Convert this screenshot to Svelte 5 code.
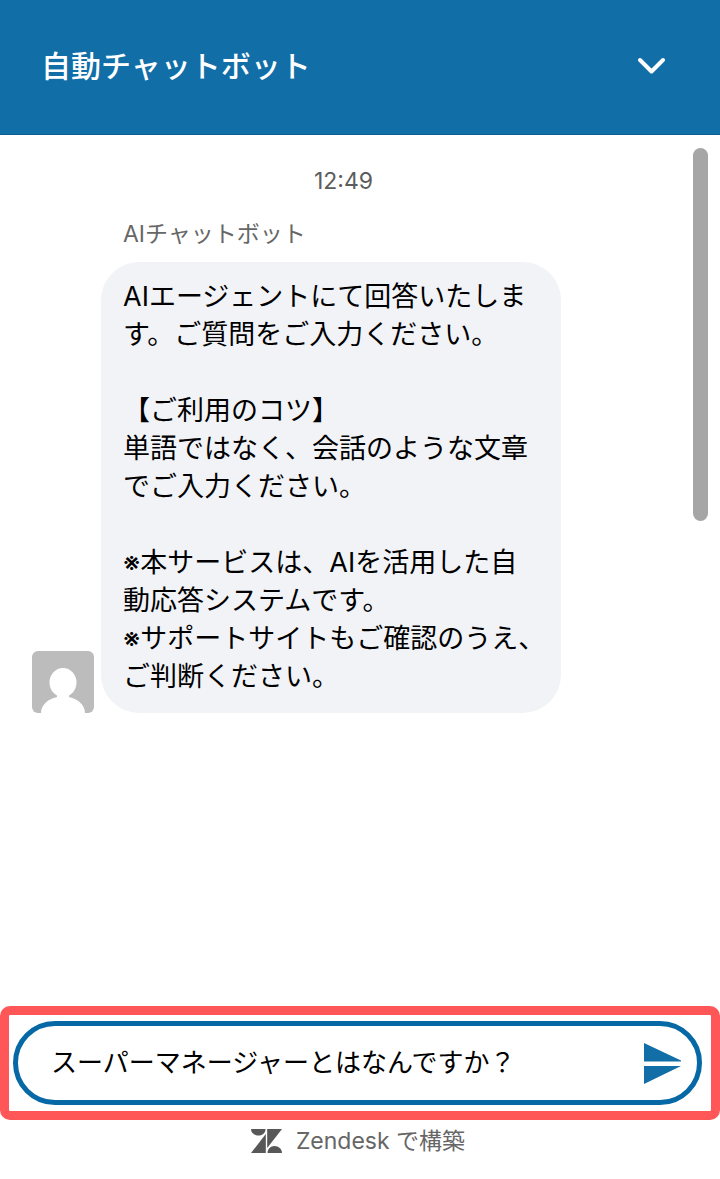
<script lang="ts">
  let title = "自動チャットボット";
  let time = "12:49";
  let sender = "AIチャットボット";
  let draft = $state("スーパーマネージャーとはなんですか？");

  const lines = [
    "AIエージェントにて回答いたしま",
    "す。ご質問をご入力ください。",
    "",
    "【ご利用のコツ】",
    "単語ではなく、会話のような文章",
    "でご入力ください。",
    "",
    "※本サービスは、AIを活用した自",
    "動応答システムです。",
    "※サポートサイトもご確認のうえ、",
    "ご判断ください。",
  ];

  function handleSubmit(event: SubmitEvent) {
    event.preventDefault();
    draft = "";
  }
</script>

<div class="widget">
  <header class="header">
    <h1 class="title">{title}</h1>
    <button class="minimize" type="button" aria-label="最小化">
      <svg width="32" height="20" viewBox="0 0 32 20" fill="none">
        <path d="M4 4L15.5 15.5L27 4" stroke="#fff" stroke-width="4" stroke-linecap="round" stroke-linejoin="round" />
      </svg>
    </button>
  </header>

  <main class="conversation">
    <div class="messages">
      <time class="time">{time}</time>
      <div class="message">
        <svg class="avatar" width="62" height="62" viewBox="0 0 62 62" aria-hidden="true">
          <rect width="62" height="62" rx="6" fill="#bcbcbc" />
          <ellipse cx="31" cy="31.5" rx="13.5" ry="14.5" fill="#fff" />
          <path d="M25 43V46C16 48 9 54 9 62H53C53 54 46 48 37 46V43Z" fill="#fff" />
        </svg>
        <div class="message-body">
          <div class="sender">{sender}</div>
          <div class="bubble">
            {#each lines as line}
              <div class="line">{line}</div>
            {/each}
          </div>
        </div>
      </div>
    </div>
    <div class="scroll-track">
      <div class="scroll-thumb"></div>
    </div>
  </main>

  <div class="highlight">
    <form class="composer" onsubmit={handleSubmit}>
      <input class="input" type="text" aria-label="メッセージを入力" bind:value={draft} />
      <button class="send" type="submit" aria-label="送信">
        <svg width="40" height="44" viewBox="0 0 40 44" fill="#116ea7">
          <path d="M1 2L38 19.5V20.5H1Z" />
          <path d="M1 25H38L1 43Z" />
        </svg>
      </button>
    </form>
  </div>

  <footer class="footer">
    <a class="brand" href="#zendesk">
      <svg width="31" height="24" viewBox="0 0 31 24" fill="#585858" aria-hidden="true">
        <path d="M0 0H14.5C14.5 4 11.5 6.5 7.5 6.5S0 4 0 0Z" />
        <path d="M14.8 5V24H0Z" />
        <path d="M16.2 0H31L16.2 19Z" />
        <path d="M16.5 24C16.5 20 19.5 17 23.5 17S31 20 31 24Z" />
      </svg>
      <span>Zendesk で構築</span>
    </a>
  </footer>
</div>

<style>
  :global(body) {
    margin: 0;
    background: #fff;
  }

  .widget {
    display: flex;
    flex-direction: column;
    min-height: 100vh;
    font-family: Inter, "Noto Sans CJK JP", sans-serif;
    color: #000;
  }

  .header {
    display: flex;
    align-items: center;
    justify-content: space-between;
    box-sizing: border-box;
    height: 135px;
    padding: 0 52px 2px 41px;
    background: #116ea7;
    border-bottom: 1px solid #0a5f96;
  }

  .title {
    margin: 0;
    font-size: 30px;
    font-weight: 500;
    line-height: 40px;
    color: #fff;
  }

  .minimize {
    display: flex;
    padding: 0;
    border: none;
    background: none;
    cursor: pointer;
  }

  .conversation {
    flex: 1;
    display: flex;
  }

  .messages {
    flex: 1;
    display: flex;
    flex-direction: column;
    padding: 30px 0 32px 32px;
  }

  .time {
    padding-right: 38px;
    font-size: 23px;
    line-height: 32px;
    text-align: center;
    color: #5c5c5c;
  }

  .message {
    display: flex;
    align-items: flex-end;
    gap: 7px;
    margin-top: 21px;
  }

  .avatar {
    flex-shrink: 0;
  }

  .sender {
    padding-left: 22px;
    font-size: 23px;
    line-height: 32px;
    color: #666;
  }

  .bubble {
    margin-top: 12px;
    padding: 16px 16px 17px 22px;
    border-radius: 38px;
    background: #f2f3f7;
    font-size: 27px;
    line-height: 38px;
  }

  .line {
    min-height: 38px;
    white-space: nowrap;
  }

  .scroll-track {
    width: 27px;
    padding-top: 13px;
  }

  .scroll-thumb {
    width: 15px;
    height: 373px;
    border-radius: 8px;
    background: #a6a6a6;
  }

  .highlight {
    padding: 6px 9px 6px 4px;
    border: 9px solid #ff5757;
    border-radius: 10px;
  }

  .composer {
    display: flex;
    align-items: center;
    box-sizing: border-box;
    height: 84px;
    padding: 0 14px 0 33px;
    border: 5px solid #0669a6;
    border-radius: 42px;
  }

  .input {
    flex: 1;
    min-width: 0;
    padding: 0;
    border: none;
    outline: none;
    background: none;
    font: inherit;
    font-size: 26px;
    line-height: 38px;
    color: #000;
  }

  .send {
    display: flex;
    padding: 0;
    border: none;
    background: none;
    cursor: pointer;
  }

  .footer {
    display: flex;
    justify-content: center;
    padding: 5px 4px 22px 0;
  }

  .brand {
    display: flex;
    align-items: center;
    gap: 14px;
    font-size: 23px;
    line-height: 32px;
    color: #666;
    text-decoration: none;
  }
</style>
